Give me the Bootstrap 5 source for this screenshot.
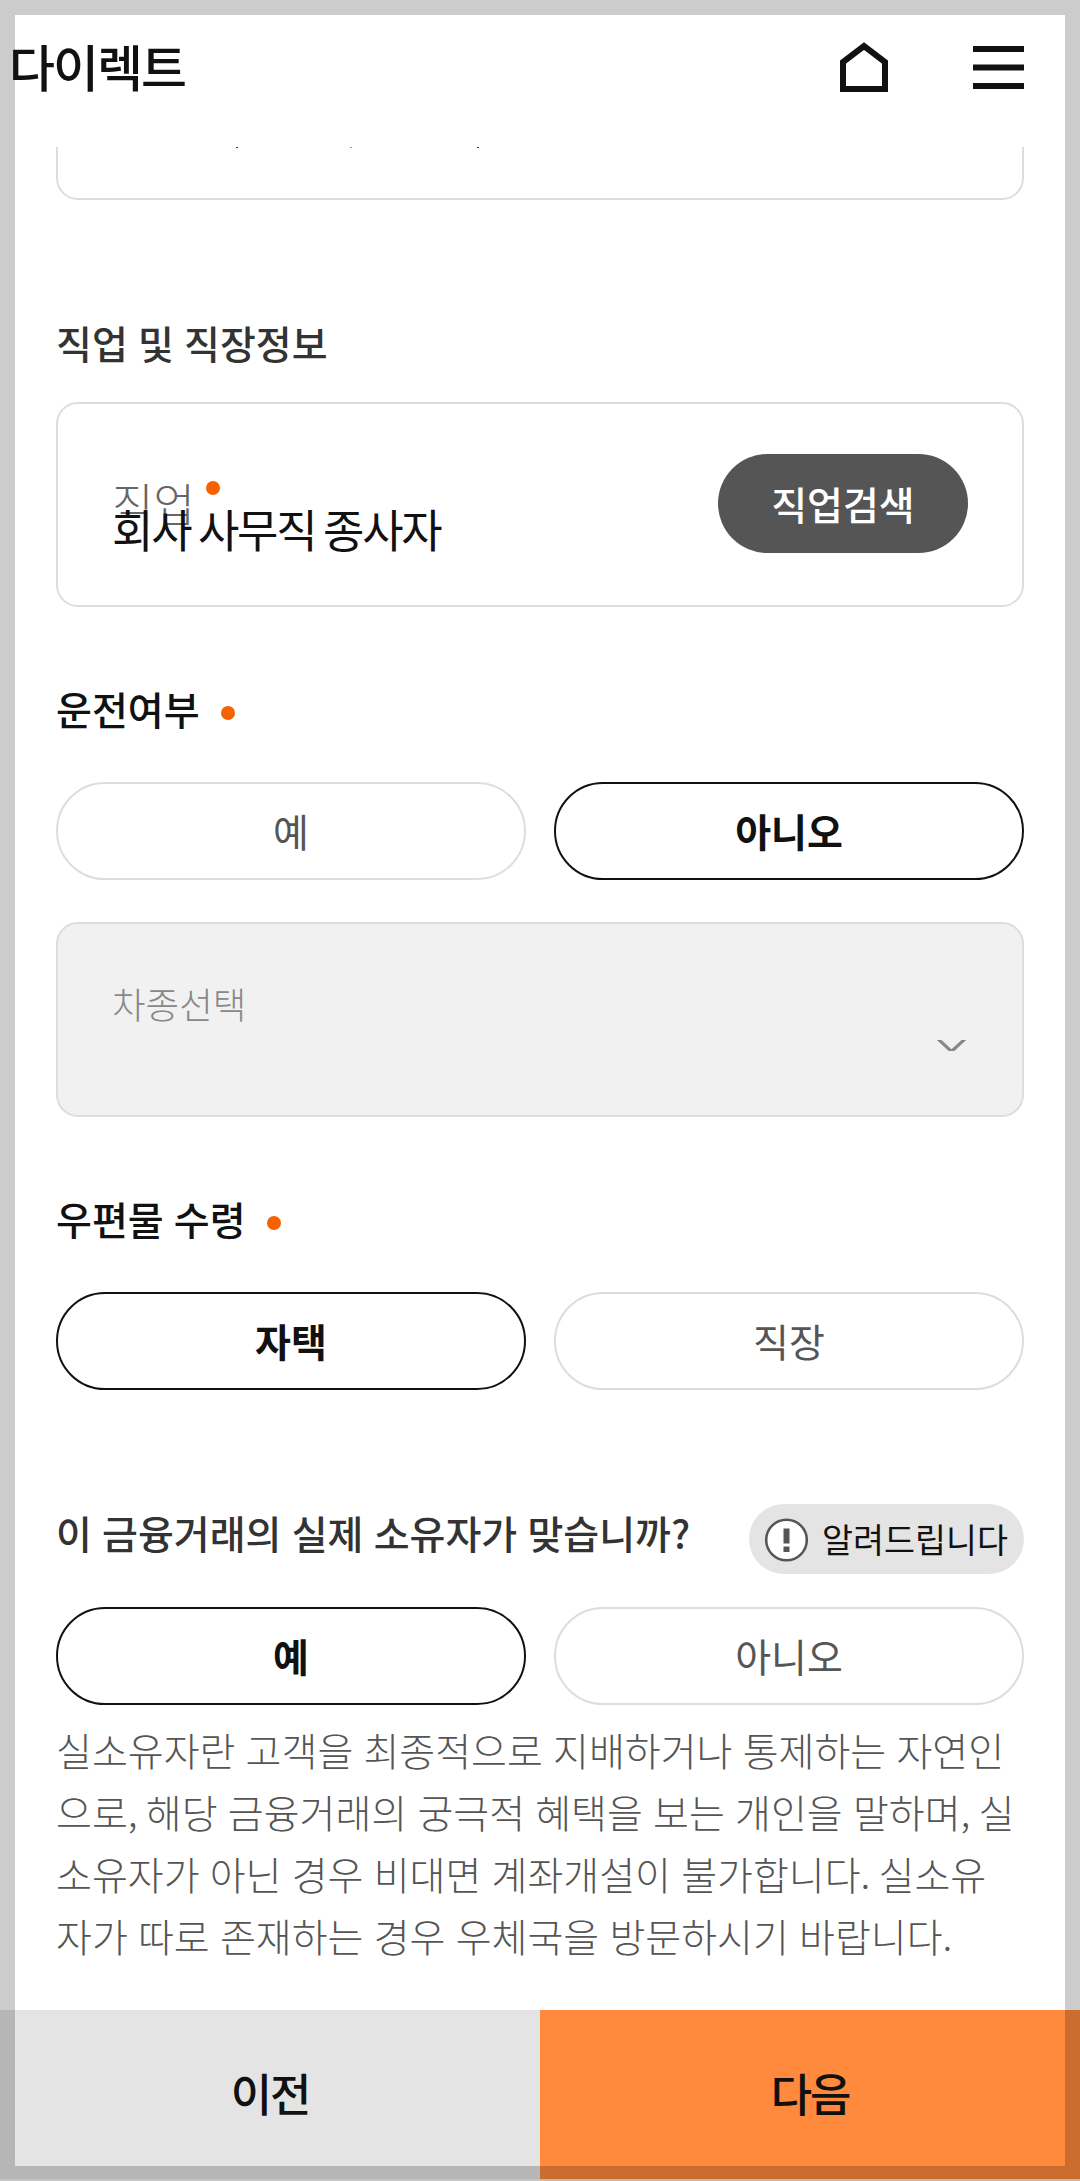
<!DOCTYPE html>
<html lang="ko">
<head>
<meta charset="utf-8">
<meta name="viewport" content="width=device-width, initial-scale=1">
<title>다이렉트</title>
<link href="https://cdn.jsdelivr.net/npm/bootstrap@5.3.0/dist/css/bootstrap.min.css" rel="stylesheet">
<style>
body{font-family:"Noto Sans CJK KR",sans-serif;font-size:39px;line-height:56px;color:#111;background:#fff;word-spacing:-.7px}
.screen{height:2181px}
.frame-edge{inset:0;border:15px solid rgba(0,0,0,.2);z-index:10;pointer-events:none}
.topbar{height:147px;padding:27px 56px 0 9px}
.brand-name{font-size:50px;font-weight:500;line-height:76px;letter-spacing:-2px}
.topicons{gap:84px;padding-top:13px}
.form-area{padding:0 56px}
.panel{border:2px solid #ddd;border-radius:22px}
.panel-cut{height:53px;border-top:0;border-radius:0 0 22px 22px}
.speck{width:2px;height:1px;background:#333}
.sec-title{font-size:39px;font-weight:500;line-height:56px;margin:0}
.tone{color:#333}
.req{width:14px;height:14px;border-radius:50%;background:#f56200;display:inline-block}
.job{height:205px;margin-top:32px;padding:0 54px}
.job-text{padding-top:23px}
.job-label{font-size:45px;font-weight:300;line-height:60px;color:#666;gap:11px}
.job-value{font-size:45px;line-height:60px;letter-spacing:-2.25px;word-spacing:-2.7px;margin-top:-34px}
.job-btn{width:250px;height:99px;background:#555;color:#fff;font-size:39px;font-weight:500;margin-bottom:3px;--bs-btn-padding-y:0}
.choice{height:98px;border:2px solid #ddd;color:#555;font-size:39px;padding:0 0 2px;background:#fff}
.choice.on{border-color:#111;color:#111;font-weight:700}
.choices{gap:28px}
.carbox{height:195px;margin-top:42px;background:#f1f1f1;color:#888;padding:52px 56px 0 54px}
.carbox-text{font-size:36.5px;font-weight:300;line-height:56px}
.info{width:275px;height:70px;background:#e4e4e4;font-size:33.700px;color:#111;padding-left:16px;gap:14px;line-height:50px}
.note-text{font-weight:300;line-height:62px;color:#555;margin:13px -8px 0 0}
.note-text span{letter-spacing:-2px}
.foot{height:171px}
.foot div{font-size:45px;font-weight:500;letter-spacing:-2.25px;padding-bottom:3px;background:#e4e4e4;border-bottom:2px solid #f5f5f5}
.foot .next-step{background:#ff893c;border-bottom-color:#ffe6d2}
</style>
<script src="https://cdn.jsdelivr.net/npm/bootstrap@5.3.0/dist/js/bootstrap.bundle.min.js"></script>
</head>
<body>
<div class="screen position-relative overflow-hidden d-flex flex-column">
  <header class="topbar d-flex justify-content-between align-items-start flex-shrink-0">
    <div class="brand-name">다이렉트</div>
    <div class="topicons d-flex">
      <svg width="50" height="54" viewBox="0 0 50 54" fill="none" stroke="#111" stroke-width="6"><path d="M4 49V22L25 6L46 22V49Z"/></svg>
      <svg width="51" height="54" viewBox="0 0 51 54" fill="#111"><path d="M0 6h51v6H0zM0 24.500h51v6H0zM0 43h51v6H0z"/></svg>
    </div>
  </header>
  <main class="form-area flex-grow-1">
    <div class="panel panel-cut d-flex">
      <span class="speck" style="margin-left:178px"></span><span class="speck opacity-50" style="margin-left:112px"></span><span class="speck" style="margin-left:125px"></span>
    </div>

    <h2 class="sec-title tone" style="margin-top:114px">직업 및 직장정보</h2>
    <div class="panel job d-flex justify-content-between align-items-center">
      <div class="job-text">
        <div class="job-label d-flex align-items-start"><span>직업</span><i class="req mt-2"></i></div>
        <div class="job-value">회사 사무직 종사자</div>
      </div>
      <button class="btn job-btn rounded-pill">직업검색</button>
    </div>

    <h2 class="sec-title d-flex align-items-center" style="margin-top:73px">운전여부<i class="req" style="margin:10px 0 0 21px"></i></h2>
    <div class="choices d-flex" style="margin-top:46px">
      <button class="btn choice rounded-pill flex-fill w-50">예</button>
      <button class="btn choice on rounded-pill flex-fill w-50">아니오</button>
    </div>
    <div class="panel carbox d-flex justify-content-between">
      <span class="carbox-text">차종선택</span>
      <svg width="29" height="11" viewBox="0 0 29 11" style="margin-top:64px" fill="none" stroke="#888" stroke-width="3.200"><path d="M0 -2L14.500 11.500L29 -2"/></svg>
    </div>

    <h2 class="sec-title d-flex align-items-center" style="margin-top:73px">우편물 수령<i class="req" style="margin:10px 0 0 21px"></i></h2>
    <div class="choices d-flex" style="margin-top:46px">
      <button class="btn choice on rounded-pill flex-fill w-50">자택</button>
      <button class="btn choice rounded-pill flex-fill w-50">직장</button>
    </div>

    <div class="d-flex justify-content-between" style="margin-top:114px">
      <h2 class="sec-title tone">이 금융거래의 실제 소유자가 맞습니까?</h2>
      <div class="info rounded-pill d-flex align-items-center text-nowrap">
        <svg width="43" height="46" viewBox="0 0 43 46"><circle cx="21.500" cy="24" r="20.300" fill="#fff" stroke="#555" stroke-width="2.500"/><path fill="#555" d="M18.500 12.500h6v15h-6zM18.500 30.500h6v5.500h-6z"/></svg>
        <span>알려드립니다</span>
      </div>
    </div>
    <div class="choices d-flex" style="margin-top:33px">
      <button class="btn choice on rounded-pill flex-fill w-50">예</button>
      <button class="btn choice rounded-pill flex-fill w-50">아니오</button>
    </div>
    <p class="note-text text-nowrap">실소유자란 고객을 최종적으로 지배하거나 통제하는 자연인<br>으로<span>,</span> 해당 금융거래의 궁극적 혜택을 보는 개인을 말하며<span>,</span> 실<br>소유자가 아닌 경우 비대면 계좌개설이 불가합니다<span>.</span> 실소유<br>자가 따로 존재하는 경우 우체국을 방문하시기 바랍니다.</p>
  </main>
  <footer class="foot d-flex flex-shrink-0">
    <div class="w-50 d-flex align-items-center justify-content-center">이전</div>
    <div class="next-step w-50 d-flex align-items-center justify-content-center">다음</div>
  </footer>
  <div class="frame-edge position-absolute"></div>
</div>
</body>
</html>
